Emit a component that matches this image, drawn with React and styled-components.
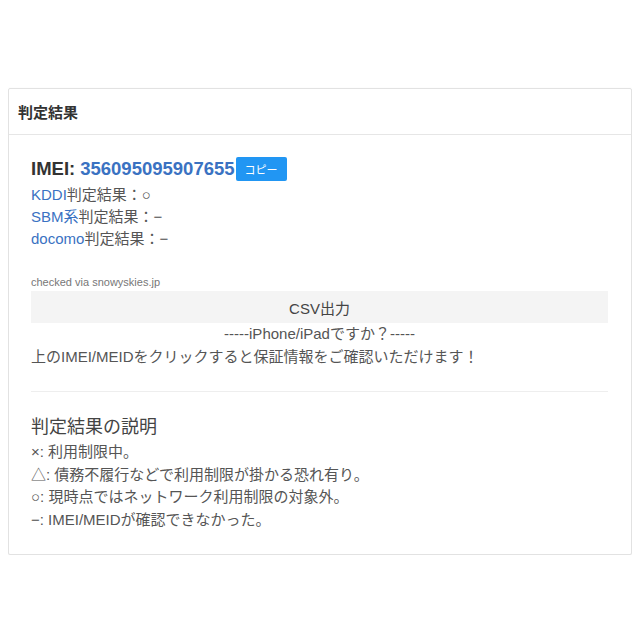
import React from "react";
import styled, { createGlobalStyle } from "styled-components";

const Global = createGlobalStyle`
  body {
    margin: 8px;
    background: #fff;
    font-family: "Liberation Sans", Arial, "Noto Sans CJK JP", sans-serif;
    color: #555;
  }
`;

const Panel = styled.section`
  margin-top: 80px;
  border: 1px solid #e2e2e2;
  border-radius: 2px;
  box-shadow: 0 1px 3px rgba(0, 0, 0, 0.08);
  background: #fff;
`;

const PanelHeader = styled.header`
  height: 45px;
  display: flex;
  align-items: center;
  padding: 0 9px;
  border-bottom: 1px solid #e6e6e6;
  font-size: 15px;
  font-weight: bold;
  color: #333;
`;

const PanelBody = styled.div`
  padding: 22px 23px 23px 22px;
`;

const ImeiRow = styled.div`
  display: flex;
  align-items: center;
  height: 24px;
  margin-bottom: 3px;
  font-size: 18.5px;
  font-weight: bold;
  color: #333;
`;

const ImeiNumber = styled.a`
  color: #3a72c2;
  text-decoration: none;
  margin-left: 5px;
`;

const CopyButton = styled.button`
  height: 24px;
  padding: 0 9px;
  border: none;
  border-radius: 2px;
  background: #2196f3;
  color: #fff;
  font-size: 11px;
  font-family: inherit;
  margin-left: 1px;
`;

const ResultLine = styled.div`
  font-size: 15px;
  line-height: 22px;
  color: #555;
`;

const Carrier = styled.a`
  color: #3a72c2;
  text-decoration: none;
`;

const Source = styled.div`
  margin-top: 25px;
  font-size: 11px;
  line-height: 15px;
  color: #777;
`;

const CsvButton = styled.button`
  display: block;
  width: 100%;
  height: 32px;
  margin-top: 1px;
  border: none;
  background: #f4f4f4;
  color: #444;
  font-size: 15px;
  font-family: inherit;
`;

const Center = styled.div`
  text-align: center;
  font-size: 15px;
  line-height: 22.5px;
  color: #555;
`;

const Notice = styled.div`
  font-size: 15px;
  line-height: 22.5px;
  color: #555;
`;

const Divider = styled.hr`
  border: none;
  border-top: 1px solid #eee;
  margin: 23px 0 22px;
`;

const SubTitle = styled.h3`
  margin: 0;
  font-size: 18px;
  font-weight: normal;
  line-height: 27px;
  color: #444;
`;

const LegendLine = styled.div`
  font-size: 15px;
  line-height: 22.5px;
  color: #555;
`;

export default function App() {
  return (
    <>
      <Global />
      <Panel>
        <PanelHeader>判定結果</PanelHeader>
        <PanelBody>
          <ImeiRow>
            IMEI:
            <ImeiNumber href="#">356095095907655</ImeiNumber>
            <CopyButton>コピー</CopyButton>
          </ImeiRow>
          <ResultLine>
            <Carrier href="#">KDDI</Carrier>判定結果：○
          </ResultLine>
          <ResultLine>
            <Carrier href="#">SBM系</Carrier>判定結果：−
          </ResultLine>
          <ResultLine>
            <Carrier href="#">docomo</Carrier>判定結果：−
          </ResultLine>
          <Source>checked via snowyskies.jp</Source>
          <CsvButton>CSV出力</CsvButton>
          <Center>-----iPhone/iPadですか？-----</Center>
          <Notice>上のIMEI/MEIDをクリックすると保証情報をご確認いただけます！</Notice>
          <Divider />
          <SubTitle>判定結果の説明</SubTitle>
          <LegendLine>×: 利用制限中。</LegendLine>
          <LegendLine>△: 債務不履行などで利用制限が掛かる恐れ有り。</LegendLine>
          <LegendLine>○: 現時点ではネットワーク利用制限の対象外。</LegendLine>
          <LegendLine>−: IMEI/MEIDが確認できなかった。</LegendLine>
        </PanelBody>
      </Panel>
    </>
  );
}
